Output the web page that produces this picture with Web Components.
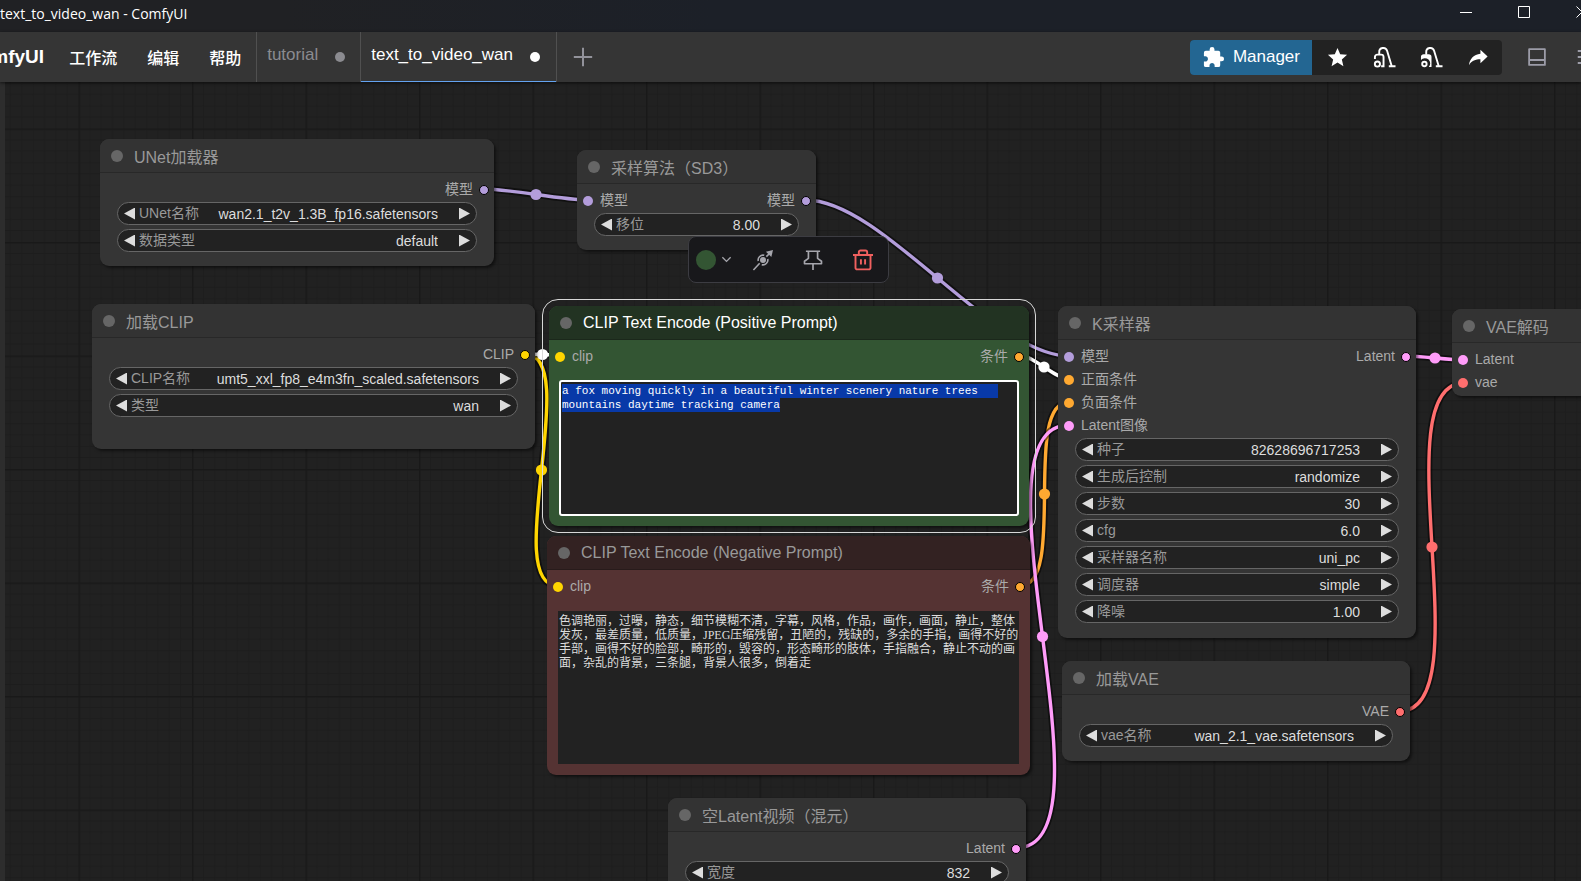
<!DOCTYPE html>
<html lang="zh-CN">
<head>
<meta charset="utf-8">
<title>text_to_video_wan - ComfyUI</title>
<style>
    body {
        margin: 0;
        background: #212121;
        font-family: "Liberation Sans", "Noto Sans CJK SC", sans-serif;
        overflow: hidden;
    }
</style>
</head>
<body>
<comfy-app></comfy-app>

<script>
const define = (name, html, setup) => {
  const template = document.createElement('template');
  template.innerHTML = html;
  customElements.define(name, class extends HTMLElement {
    constructor() {
      super();
      this.attachShadow({ mode: 'open' });
      this.shadowRoot.appendChild(template.content.cloneNode(true));
    }
    connectedCallback() {
      if (setup) setup(this, this.shadowRoot);
    }
  });
};

// icons
const ICONS = {
  puzzle: '<path fill="currentColor" d="M20.5,11H19V7C19,5.89 18.1,5 17,5H13V3.5A2.5,2.5 0 0,0 10.5,1A2.5,2.5 0 0,0 8,3.5V5H4A2,2 0 0,0 2,7V10.8H3.5C5,10.8 6.2,12 6.2,13.5C6.2,15 5,16.2 3.5,16.2H2V20A2,2 0 0,0 4,22H7.8V20.5C7.8,19 9,17.8 10.5,17.8C12,17.8 13.2,19 13.2,20.5V22H17A2,2 0 0,0 19,20V16H20.5A2.5,2.5 0 0,0 23,13.5A2.5,2.5 0 0,0 20.5,11Z"/>',
  star: '<path fill="currentColor" d="M12,17.27L18.18,21L16.54,13.97L22,9.24L14.81,8.62L12,2L9.19,8.62L2,9.24L7.45,13.97L5.82,21L12,17.27Z"/>',
  vacuum: '<g fill="none" stroke="currentColor" stroke-width="2"><path d="M6.5 9V6.5A4.2 4.2 0 0 1 14.7 5L19.4 20.6M16.5 21.1H23.5M2 13.5V11.5A2.5 2.5 0 0 1 4.5 9H8.5A2.5 2.5 0 0 1 11 11.5V21.1H8.5"/><circle cx="4.6" cy="18.8" r="2.7"/></g>',
  vacuumFull: '<path fill="currentColor" d="M1 14.5V11.5A3 3 0 0 1 4 8.5H9A3 3 0 0 1 12 11.5V22H9.2A4.8 4.8 0 0 0 1 14.5Z"/><g fill="none" stroke="currentColor" stroke-width="2"><path d="M6.5 9V6.5A4.2 4.2 0 0 1 14.7 5L19.4 20.6M16.5 21.1H23.5"/><circle cx="4.6" cy="18.8" r="2.3"/></g>',
  share: '<path fill="currentColor" d="M21.5,11L14,4V8C7,9 3,13 2,20C5,15.5 9,13.9 14,13.9V18Z"/>',
  plus: '<path fill="none" stroke="currentColor" stroke-width="2.4" d="M12 1V23M1 12H23"/>',
  panel: '<path fill="none" stroke="currentColor" stroke-width="2.4" stroke-linejoin="round" d="M1.5 1.5H22.5V22.5H1.5ZM1.5 16H22.5"/>',
  menu: '<path fill="none" stroke="currentColor" stroke-width="2.4" d="M1 4H23M1 12H23M1 20H23"/>',
  minimize: '<path stroke="currentColor" stroke-width="2" d="M0 13H24"/>',
  maximize: '<path fill="none" stroke="currentColor" stroke-width="2" d="M1 1H23V23H1Z"/>',
  close: '<path stroke="currentColor" stroke-width="2" d="M1 1L23 23M23 1L1 23"/>',
  chevron: '<path fill="none" stroke="currentColor" stroke-width="3.5" d="M1 6L12 17L23 6"/>',
  bypass: '<g fill="none" stroke="currentColor" stroke-width="1.9"><path d="M0.5 24L8 16M16 8L20 4"/><path d="M6.3 13.2A5.8 5.8 0 0 1 13.5 6.4M17.7 10.8A5.8 5.8 0 0 1 10.5 17.6"/></g><circle cx="12" cy="12" r="3.6" fill="currentColor"/><path fill="currentColor" d="M24 0L15.5 2L22 8.5Z"/>',
  pin: '<path fill="none" stroke="currentColor" stroke-width="2" stroke-linejoin="round" d="M3.5 1.5H20.5M6.5 1.5V10L1.8 13.5V16.5H22.2V13.5L17.5 10V1.5M12 16.5V24"/>',
  trash: '<path fill="none" stroke="currentColor" stroke-width="2.3" stroke-linejoin="round" d="M0 6H24M7 6V2.5A2 2 0 0 1 9 0.5H15A2 2 0 0 1 17 2.5V6M3 6V21A2 2 0 0 0 5 23.2H19A2 2 0 0 0 21 21V6M9.5 11V17.5M14.5 11V17.5"/>'
};

define('c-icon', `
    <style>
        :host {
            display: inline-block;
            width: 20px;
            height: 20px;
        }
        svg {
            display: block;
            width: 100%;
            height: 100%;
            overflow: visible;
        }
    </style>
    <svg viewBox="0 0 24 24" aria-hidden="true"></svg>
`, (el, root) => {
  root.querySelector('svg').innerHTML = ICONS[el.getAttribute('name')] || '';
});

define('window-bar', `
    <style>
        :host {
            display: flex;
            justify-content: space-between;
            height: 32px;
            background: linear-gradient(90deg, #202124 0, #202124 18%, #1c2028 45%, #1c2028 100%);
            color: #fff;
            overflow: hidden;
        }
        .title {
            font: 14px/27px "Open Sans", "Noto Sans", sans-serif;
        }
        .controls {
            display: flex;
            flex: none;
            margin-right: -30px;
        }
        button {
            width: 58px;
            height: 26px;
            padding: 0;
            border: 0;
            background: none;
            color: inherit;
        }
        c-icon {
            width: 12px;
            height: 12px;
        }
    </style>
    <div class="title">text_to_video_wan - ComfyUI</div>
    <div class="controls">
        <button aria-label="Minimize"><c-icon name="minimize"></c-icon></button>
        <button aria-label="Maximize"><c-icon name="maximize"></c-icon></button>
        <button aria-label="Close"><c-icon name="close"></c-icon></button>
    </div>
`);

define('workflow-tab', `
    <style>
        :host {
            display: block;
            border-left: 1px solid #505050;
            color: #8b8b90;
        }
        :host([active]) {
            color: #fff;
            border-right: 1px solid #505050;
        }
        button {
            box-sizing: border-box;
            display: flex;
            align-items: center;
            gap: 17px;
            height: 50px;
            padding: 0 15px 4px 10px;
            border: 0;
            border-bottom: 1px solid transparent;
            background: none;
            color: inherit;
            font: 17px/20px "Liberation Sans", sans-serif;
        }
        :host([active]) button {
            border-bottom-color: #64a3f0;
            padding-right: 16px;
        }
        i {
            width: 10px;
            height: 10px;
            border-radius: 50%;
            background: currentColor;
            margin-top: 4px;
        }
    </style>
    <button><slot></slot><i></i></button>
`);

define('menu-bar', `
    <style>
        :host {
            display: flex;
            align-items: center;
            height: 50px;
            background: #353535;
            color: #fff;
            overflow: hidden;
            box-shadow: 0 1px 3px rgba(0, 0, 0, .6);
            position: relative;
            z-index: 1;
        }
        .logo {
            font-size: 19px;
            font-weight: 700;
            line-height: 50px;
            margin-left: -34px;
            align-self: flex-start;
        }
        nav {
            display: flex;
            gap: 30px;
            padding: 4px 15px 0 25px;
        }
        nav button {
            font: 500 16px/24px "Liberation Sans", "Noto Sans CJK SC", sans-serif;
        }
        button {
            border: 0;
            padding: 0;
            background: none;
            color: inherit;
        }
        button c-icon {
            display: block;
        }
        .add {
            padding: 0 16px;
            color: #92929a;
        }
        .right {
            display: flex;
            align-items: center;
            margin-left: auto;
            margin-right: -14px;
            color: #9c9ca8;
        }
        .group {
            display: flex;
            height: 35px;
            margin-right: 26px;
            border-radius: 4px;
            background: #222;
            color: #fff;
            overflow: hidden;
        }
        .group button {
            display: flex;
            align-items: center;
            justify-content: center;
            width: 47px;
        }
        .group .manager {
            width: auto;
            gap: 8px;
            padding: 0 12px;
            margin-right: 2px;
            box-shadow: none;
            background: #236692;
            font: 17px/20px "Liberation Sans", sans-serif;
        }
        .group c-icon {
            width: 23px;
            height: 23px;
        }
        .panel c-icon {
            width: 18px;
            height: 18px;
            margin-right: 31px;
        }
        .menu c-icon {
            width: 18px;
            height: 18px;
        }
    </style>
    <div class="logo">ComfyUI</div>
    <nav>
        <button>工作流</button>
        <button>编辑</button>
        <button>帮助</button>
    </nav>
    <workflow-tab>tutorial</workflow-tab>
    <workflow-tab active>text_to_video_wan</workflow-tab>
    <button class="add" aria-label="New workflow"><c-icon name="plus"></c-icon></button>
    <div class="right">
        <div class="group">
            <button class="manager"><c-icon name="puzzle"></c-icon>Manager</button>
            <button aria-label="Favorites"><c-icon name="star"></c-icon></button>
            <button aria-label="Unload models"><c-icon name="vacuum"></c-icon></button>
            <button aria-label="Free cache"><c-icon name="vacuumFull"></c-icon></button>
            <button aria-label="Share"><c-icon name="share"></c-icon></button>
        </div>
        <button class="panel" aria-label="Toggle panel"><c-icon name="panel"></c-icon></button>
        <button class="menu" aria-label="Menu"><c-icon name="menu"></c-icon></button>
    </div>
`);

define('graph-node', `
    <style>
        :host {
            box-sizing: border-box;
            display: flex;
            flex-direction: column;
            border-radius: 9px;
            background: var(--node-bg, #353535);
            box-shadow: 2px 2px 3px rgba(0, 0, 0, .5);
        }
        :host([color="green"]) {
            --node-bg: #335533;
            --node-title: #223322;
        }
        :host([color="red"]) {
            --node-bg: #553333;
            --node-title: #332222;
        }
        :host([selected]) {
            outline: 1px solid #d8d8d8;
            outline-offset: 6px;
        }
        header {
            box-sizing: border-box;
            display: flex;
            align-items: center;
            gap: 11px;
            height: 34px;
            padding: 0 11px;
            border-bottom: 1px solid rgba(0, 0, 0, .2);
            border-radius: 9px 9px 0 0;
            background: var(--node-title, #333);
            color: #999;
            font-size: 16px;
            white-space: nowrap;
        }
        :host([selected]) header {
            color: #fff;
        }
        header i {
            width: 12px;
            height: 12px;
            border-radius: 50%;
            background: #666;
        }
        .ports {
            display: flex;
            justify-content: space-between;
            padding: 5px 5px 1px 6px;
        }
        .widgets {
            display: flex;
            flex-direction: column;
            flex: 1;
            gap: 4px;
            padding: 0 17px;
        }
        :host([color]) .widgets {
            padding: 12px 11px 11px;
        }
    </style>
    <header><i></i><span></span></header>
    <div class="ports">
        <div><slot name="in"></slot></div>
        <div><slot name="out"></slot></div>
    </div>
    <div class="widgets"><slot></slot></div>
`, (el, root) => {
  root.querySelector('span').textContent = el.getAttribute('label');
});

define('node-port', `
    <style>
        :host {
            display: flex;
            align-items: center;
            gap: 7px;
            height: 23px;
            color: #aaa;
            font-size: 14px;
            line-height: 23px;
        }
        :host([type="model"]) { --port: #b39ddb; }
        :host([type="clip"]) { --port: #ffd500; }
        :host([type="cond"]) { --port: #ffa931; }
        :host([type="latent"]) { --port: #ff9cf9; }
        :host([type="vae"]) { --port: #ff6e6e; }
        :host([slot="out"]) {
            flex-direction: row-reverse;
            gap: 6px;
        }
        i {
            box-sizing: border-box;
            width: 10px;
            height: 10px;
            border-radius: 50%;
            background: var(--port);
        }
        :host([slot="out"]) i {
            border: 1px solid #000;
        }
    </style>
    <i></i><slot></slot>
`);

define('node-widget', `
    <style>
        :host {
            box-sizing: border-box;
            display: flex;
            align-items: center;
            height: 23px;
            padding: 0 6px;
            border: 1px solid #666;
            border-radius: 12px;
            background: #222;
            font-size: 14px;
        }
        button {
            flex: none;
            width: 11px;
            height: 12px;
            padding: 0;
            border: 0;
            background: #ddd;
        }
        .prev {
            clip-path: polygon(100% 0, 100% 100%, 0 50%);
            margin-right: 4px;
        }
        .next {
            clip-path: polygon(0 0, 0 100%, 100% 50%);
            margin-left: 21px;
        }
        label {
            flex: none;
            color: #999;
            line-height: 21px;
        }
        select, input {
            appearance: none;
            flex: 1;
            min-width: 0;
            height: 21px;
            margin: 0;
            padding: 0;
            border: 0;
            outline: 0;
            background: none;
            color: #ddd;
            font: inherit;
            text-align: right;
            text-align-last: right;
        }
    </style>
    <button class="prev" aria-label="Previous"></button>
    <label for="value"></label>
    <button class="next" aria-label="Next"></button>
`, (el, root) => {
  const value = el.getAttribute('value');
  let field;
  if (el.hasAttribute('number')) {
    field = document.createElement('input');
    field.type = 'text';
    field.inputMode = 'decimal';
    field.value = value;
  } else {
    field = document.createElement('select');
    field.add(new Option(value));
  }
  field.id = 'value';
  root.querySelector('label').textContent = el.getAttribute('label');
  root.querySelector('label').after(field);
});

define('prompt-text', `
    <style>
        :host {
            display: flex;
            flex: 1;
        }
        textarea {
            box-sizing: border-box;
            flex: 1;
            min-width: 0;
            padding: 3px 0 2px 1px;
            border: 0;
            outline: 0;
            resize: none;
            overflow: hidden;
            background: #222;
            color: #ddd;
            font: 12px/14px "Liberation Serif", "Noto Sans CJK SC", serif;
        }
        :host([active]) textarea {
            padding-left: 2px;
            font: 11px/14px "Liberation Mono", monospace;
            outline: 2px solid #fff;
            outline-offset: -1px;
            border-radius: 2px;
        }
        ::selection {
            background: #0839a8;
            color: #fff;
        }
    </style>
    <textarea aria-label="Prompt" spellcheck="false"></textarea>
`, (el, root) => {
  const area = root.querySelector('textarea');
  area.value = el.getAttribute('text');
  if (el.hasAttribute('active')) {
    area.focus();
    area.select();
  }
});

define('node-toolbox', `
    <style>
        :host {
            box-sizing: border-box;
            display: flex;
            align-items: center;
            gap: 30px;
            height: 47px;
            padding: 0 14px 0 7px;
            border: 1px solid #3c3c42;
            border-radius: 8px;
            background: #18181b;
            color: #a6a6ad;
        }
        button {
            display: flex;
            align-items: center;
            gap: 6px;
            padding: 0;
            border: 0;
            background: none;
            color: inherit;
        }
        i {
            width: 20px;
            height: 20px;
            border-radius: 50%;
            background: #335533;
        }
        .color {
            margin-right: -8px;
        }
        .color c-icon {
            width: 9px;
            height: 9px;
        }
        .delete {
            color: #f0605f;
        }
    </style>
    <button class="color" aria-label="Color"><i></i><c-icon name="chevron"></c-icon></button>
    <button aria-label="Bypass"><c-icon name="bypass"></c-icon></button>
    <button aria-label="Pin"><c-icon name="pin"></c-icon></button>
    <button class="delete" aria-label="Delete"><c-icon name="trash"></c-icon></button>
`);

// from x, from y, to x, to y, color
const LINKS = [
  [479, 107, 583, 118, '#b39ddb'],
  [801, 118, 1064, 274, '#b39ddb'],
  [520, 272, 553, 504, '#ffd500'],
  [520, 272, 555, 273, '#fff'],
  [1014, 273, 1064, 297, '#fff'],
  [1015, 504, 1064, 320, '#ffa931'],
  [1011, 766, 1064, 343, '#ff9cf9'],
  [1401, 274, 1459, 278, '#ff9cf9'],
  [1395, 629, 1459, 301, '#ff6e6e']
];

define('graph-links', `
    <style>
        :host {
            display: block;
            height: 100%;
        }
        svg {
            display: block;
            width: 100%;
            height: 100%;
        }
    </style>
    <svg aria-hidden="true">
        <defs>
            <pattern id="grid" x="73.5" y="46.5" width="113.5" height="113.5" patternUnits="userSpaceOnUse">
                <path id="minor" stroke="#1d1d1d" stroke-width="1"/>
                <path d="M0 0H113.5M0 0V113.5" stroke="#191919" stroke-width="3"/>
            </pattern>
        </defs>
        <rect width="100%" height="100%" fill="url(#grid)"/>
        <g id="links" fill="none"></g>
    </svg>
`, (el, root) => {
  let minor = '';
  for (let i = 1; i < 10; i++) {
    minor += `M0 ${i * 11.35}H113.5M${i * 11.35} 0V113.5`;
  }
  root.getElementById('minor').setAttribute('d', minor);

  root.getElementById('links').innerHTML = LINKS.map(([x1, y1, x2, y2, color]) => {
    const bend = Math.hypot(x2 - x1, y2 - y1) / 4;
    const d = `M${x1} ${y1}C${x1 + bend} ${y1} ${x2 - bend} ${y2} ${x2} ${y2}`;
    return `<path d="${d}" stroke="#000" stroke-opacity=".5" stroke-width="7"/>
      <path d="${d}" stroke="${color}" stroke-width="3.4"/>
      <circle cx="${(x1 + x2) / 2}" cy="${(y1 + y2) / 2}" r="5.6" fill="${color}"/>`;
  }).join('');
});

define('graph-canvas', `
    <style>
        :host {
            display: block;
            flex: 1;
            position: relative;
            overflow: hidden;
            border-left: 5px solid #2d2d2d;
            background: #212121;
        }
        graph-node, node-toolbox {
            position: absolute;
        }
        #unet { left: 95px; top: 57px; width: 394px; height: 127px; }
        #sd3 { left: 572px; top: 68px; width: 239px; height: 100px; }
        #clip { left: 87px; top: 222px; width: 443px; height: 145px; }
        #negative { left: 542px; top: 454px; width: 483px; height: 239px; }
        #positive { left: 544px; top: 224px; width: 480px; height: 220px; }
        #sampler { left: 1053px; top: 224px; width: 358px; height: 332px; }
        #decode { left: 1447px; top: 227px; width: 238px; height: 87px; }
        #vae { left: 1057px; top: 579px; width: 348px; height: 100px; }
        #latent { left: 663px; top: 716px; width: 358px; height: 190px; }
        node-toolbox { left: 683px; top: 154px; width: 201px; }
    </style>
    <graph-links></graph-links>
    <graph-node id="unet" label="UNet加载器">
        <node-port slot="out" type="model">模型</node-port>
        <node-widget label="UNet名称" value="wan2.1_t2v_1.3B_fp16.safetensors"></node-widget>
        <node-widget label="数据类型" value="default"></node-widget>
    </graph-node>
    <graph-node id="sd3" label="采样算法（SD3）">
        <node-port slot="in" type="model">模型</node-port>
        <node-port slot="out" type="model">模型</node-port>
        <node-widget number label="移位" value="8.00"></node-widget>
    </graph-node>
    <graph-node id="clip" label="加载CLIP">
        <node-port slot="out" type="clip">CLIP</node-port>
        <node-widget label="CLIP名称" value="umt5_xxl_fp8_e4m3fn_scaled.safetensors"></node-widget>
        <node-widget label="类型" value="wan"></node-widget>
    </graph-node>
    <graph-node id="negative" color="red" label="CLIP Text Encode (Negative Prompt)">
        <node-port slot="in" type="clip">clip</node-port>
        <node-port slot="out" type="cond">条件</node-port>
        <prompt-text text="色调艳丽，过曝，静态，细节模糊不清，字幕，风格，作品，画作，画面，静止，整体发灰，最差质量，低质量，JPEG压缩残留，丑陋的，残缺的，多余的手指，画得不好的手部，画得不好的脸部，畸形的，毁容的，形态畸形的肢体，手指融合，静止不动的画面，杂乱的背景，三条腿，背景人很多，倒着走"></prompt-text>
    </graph-node>
    <graph-node id="positive" color="green" selected label="CLIP Text Encode (Positive Prompt)">
        <node-port slot="in" type="clip">clip</node-port>
        <node-port slot="out" type="cond">条件</node-port>
        <prompt-text active text="a fox moving quickly in a beautiful winter scenery nature trees  mountains daytime tracking camera"></prompt-text>
    </graph-node>
    <graph-node id="sampler" label="K采样器">
        <node-port slot="in" type="model">模型</node-port>
        <node-port slot="in" type="cond">正面条件</node-port>
        <node-port slot="in" type="cond">负面条件</node-port>
        <node-port slot="in" type="latent">Latent图像</node-port>
        <node-port slot="out" type="latent">Latent</node-port>
        <node-widget number label="种子" value="82628696717253"></node-widget>
        <node-widget label="生成后控制" value="randomize"></node-widget>
        <node-widget number label="步数" value="30"></node-widget>
        <node-widget number label="cfg" value="6.0"></node-widget>
        <node-widget label="采样器名称" value="uni_pc"></node-widget>
        <node-widget label="调度器" value="simple"></node-widget>
        <node-widget number label="降噪" value="1.00"></node-widget>
    </graph-node>
    <graph-node id="decode" label="VAE解码">
        <node-port slot="in" type="latent">Latent</node-port>
        <node-port slot="in" type="vae">vae</node-port>
    </graph-node>
    <graph-node id="vae" label="加载VAE">
        <node-port slot="out" type="vae">VAE</node-port>
        <node-widget label="vae名称" value="wan_2.1_vae.safetensors"></node-widget>
    </graph-node>
    <graph-node id="latent" label="空Latent视频（混元）">
        <node-port slot="out" type="latent">Latent</node-port>
        <node-widget number label="宽度" value="832"></node-widget>
    </graph-node>
    <node-toolbox></node-toolbox>
`);

define('comfy-app', `
    <style>
        :host {
            display: flex;
            flex-direction: column;
            height: 100vh;
        }
        window-bar, menu-bar {
            flex: none;
        }
    </style>
    <window-bar></window-bar>
    <menu-bar></menu-bar>
    <graph-canvas></graph-canvas>
`);
</script>
</body>
</html>
